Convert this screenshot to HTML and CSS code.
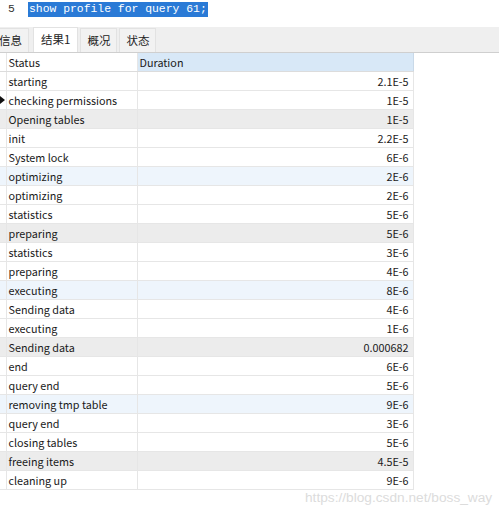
FILE: index.html
```html
<!DOCTYPE html>
<html>
<head>
<meta charset="utf-8">
<link rel="stylesheet" href="styles.css">
</head>
<body>
<div class="editor">
  <span class="lineno">5</span>
  <span class="code">show profile for query 61;</span>
</div>
<div class="tabs">
  <div class="tab cut">信息</div>
  <div class="tab active">结果1</div>
  <div class="tab">概况</div>
  <div class="tab">状态</div>
</div>
<table class="grid">
  <colgroup><col class="c-ind"><col class="c-status"><col class="c-dur"></colgroup>
  <thead>
    <tr><th class="ind"></th><th class="h-status">Status</th><th class="h-dur">Duration</th></tr>
  </thead>
  <tbody>
    <tr><td class="ind"></td><td>starting</td><td class="num">2.1E-5</td></tr>
    <tr><td class="ind"><span class="arrow"></span></td><td>checking permissions</td><td class="num">1E-5</td></tr>
    <tr class="gray"><td class="ind"></td><td>Opening tables</td><td class="num">1E-5</td></tr>
    <tr><td class="ind"></td><td>init</td><td class="num">2.2E-5</td></tr>
    <tr><td class="ind"></td><td>System lock</td><td class="num">6E-6</td></tr>
    <tr class="blue"><td class="ind"></td><td>optimizing</td><td class="num">2E-6</td></tr>
    <tr><td class="ind"></td><td>optimizing</td><td class="num">2E-6</td></tr>
    <tr><td class="ind"></td><td>statistics</td><td class="num">5E-6</td></tr>
    <tr class="gray"><td class="ind"></td><td>preparing</td><td class="num">5E-6</td></tr>
    <tr><td class="ind"></td><td>statistics</td><td class="num">3E-6</td></tr>
    <tr><td class="ind"></td><td>preparing</td><td class="num">4E-6</td></tr>
    <tr class="blue"><td class="ind"></td><td>executing</td><td class="num">8E-6</td></tr>
    <tr><td class="ind"></td><td>Sending data</td><td class="num">4E-6</td></tr>
    <tr><td class="ind"></td><td>executing</td><td class="num">1E-6</td></tr>
    <tr class="gray"><td class="ind"></td><td>Sending data</td><td class="num">0.000682</td></tr>
    <tr><td class="ind"></td><td>end</td><td class="num">6E-6</td></tr>
    <tr><td class="ind"></td><td>query end</td><td class="num">5E-6</td></tr>
    <tr class="blue"><td class="ind"></td><td>removing tmp table</td><td class="num">9E-6</td></tr>
    <tr><td class="ind"></td><td>query end</td><td class="num">3E-6</td></tr>
    <tr><td class="ind"></td><td>closing tables</td><td class="num">5E-6</td></tr>
    <tr class="gray"><td class="ind"></td><td>freeing items</td><td class="num">4.5E-5</td></tr>
    <tr><td class="ind"></td><td>cleaning up</td><td class="num">9E-6</td></tr>
  </tbody>
</table>
<div class="watermark">https://blog.csdn.net/boss_way</div>
</body>
</html>
```
FILE: styles.css
```css
html, body {
  margin: 0;
  padding: 0;
  background: #ffffff;
}
body {
  width: 499px;
  height: 514px;
  overflow: hidden;
  position: relative;
  font-family: "Noto Sans CJK SC", sans-serif;
  font-size: 10.8px;
  color: #1a1a1a;
}
.editor {
  height: 27px;
  display: flex;
  align-items: flex-start;
  padding-top: 2px;
  box-sizing: border-box;
  font-family: "Liberation Mono", monospace;
  font-size: 11.4px;
}
.lineno {
  width: 28px;
  padding-left: 8px;
  box-sizing: border-box;
  line-height: 15px;
  color: #333;
}
.code {
  background: #2a7ad6;
  color: #ffffff;
  line-height: 15px;
  height: 15px;
  padding: 0 1px;
}
.tabs {
  height: 26px;
  background: #efefef;
  border-bottom: 1px solid #cfcfcf;
  box-sizing: border-box;
  display: flex;
  align-items: flex-end;
  font-size: 11.5px;
}
.tab {
  height: 23px;
  line-height: 23px;
  padding: 0 6px;
  margin-right: 2px;
  border: 1px solid #e2e2e2;
  border-bottom: none;
  background: #f2f2f2;
  color: #222;
}
.tab.cut {
  margin-left: -8px;
  margin-right: 4px;
}
.tab.active {
  background: #ffffff;
  height: 24px;
  padding: 0 7px;
}
.grid {
  border-collapse: collapse;
  table-layout: fixed;
  width: 413px;
  margin-top: 0;
}
.c-ind { width: 6px; }
.c-status { width: 131px; }
.c-dur { width: 276px; }
.grid th, .grid td {
  height: 18px;
  padding: 0 4px 0 2px;
  border-bottom: 1px solid #e6e6e6;
  border-right: 1px solid #e6e6e6;
  font-weight: normal;
  text-align: left;
  white-space: nowrap;
  overflow: hidden;
  line-height: 18px;
}
.grid .ind {
  padding: 0;
  position: relative;
  border-right: 1px solid #e6e6e6;
}
.grid th {
  background: #ffffff;
  border-bottom: 1px solid #dcdcdc;
}
.grid th.h-dur {
  background: #d8e8f7;
  border-right: 1px solid #c9d9e8;
}
.grid td.num {
  text-align: right;
  padding-right: 4px;
}
.grid tr.gray td { background: #ececec; }
.grid tr.blue td { background: #eef5fc; }
.arrow {
  position: absolute;
  left: 0;
  top: 5px;
  width: 0;
  height: 0;
  border-top: 4px solid transparent;
  border-bottom: 4px solid transparent;
  border-left: 5px solid #111;
}
.watermark {
  position: absolute;
  left: 305px;
  top: 490px;
  font-family: "Liberation Sans", sans-serif;
  font-size: 13.7px;
  color: #dcdcdc;
}
```
